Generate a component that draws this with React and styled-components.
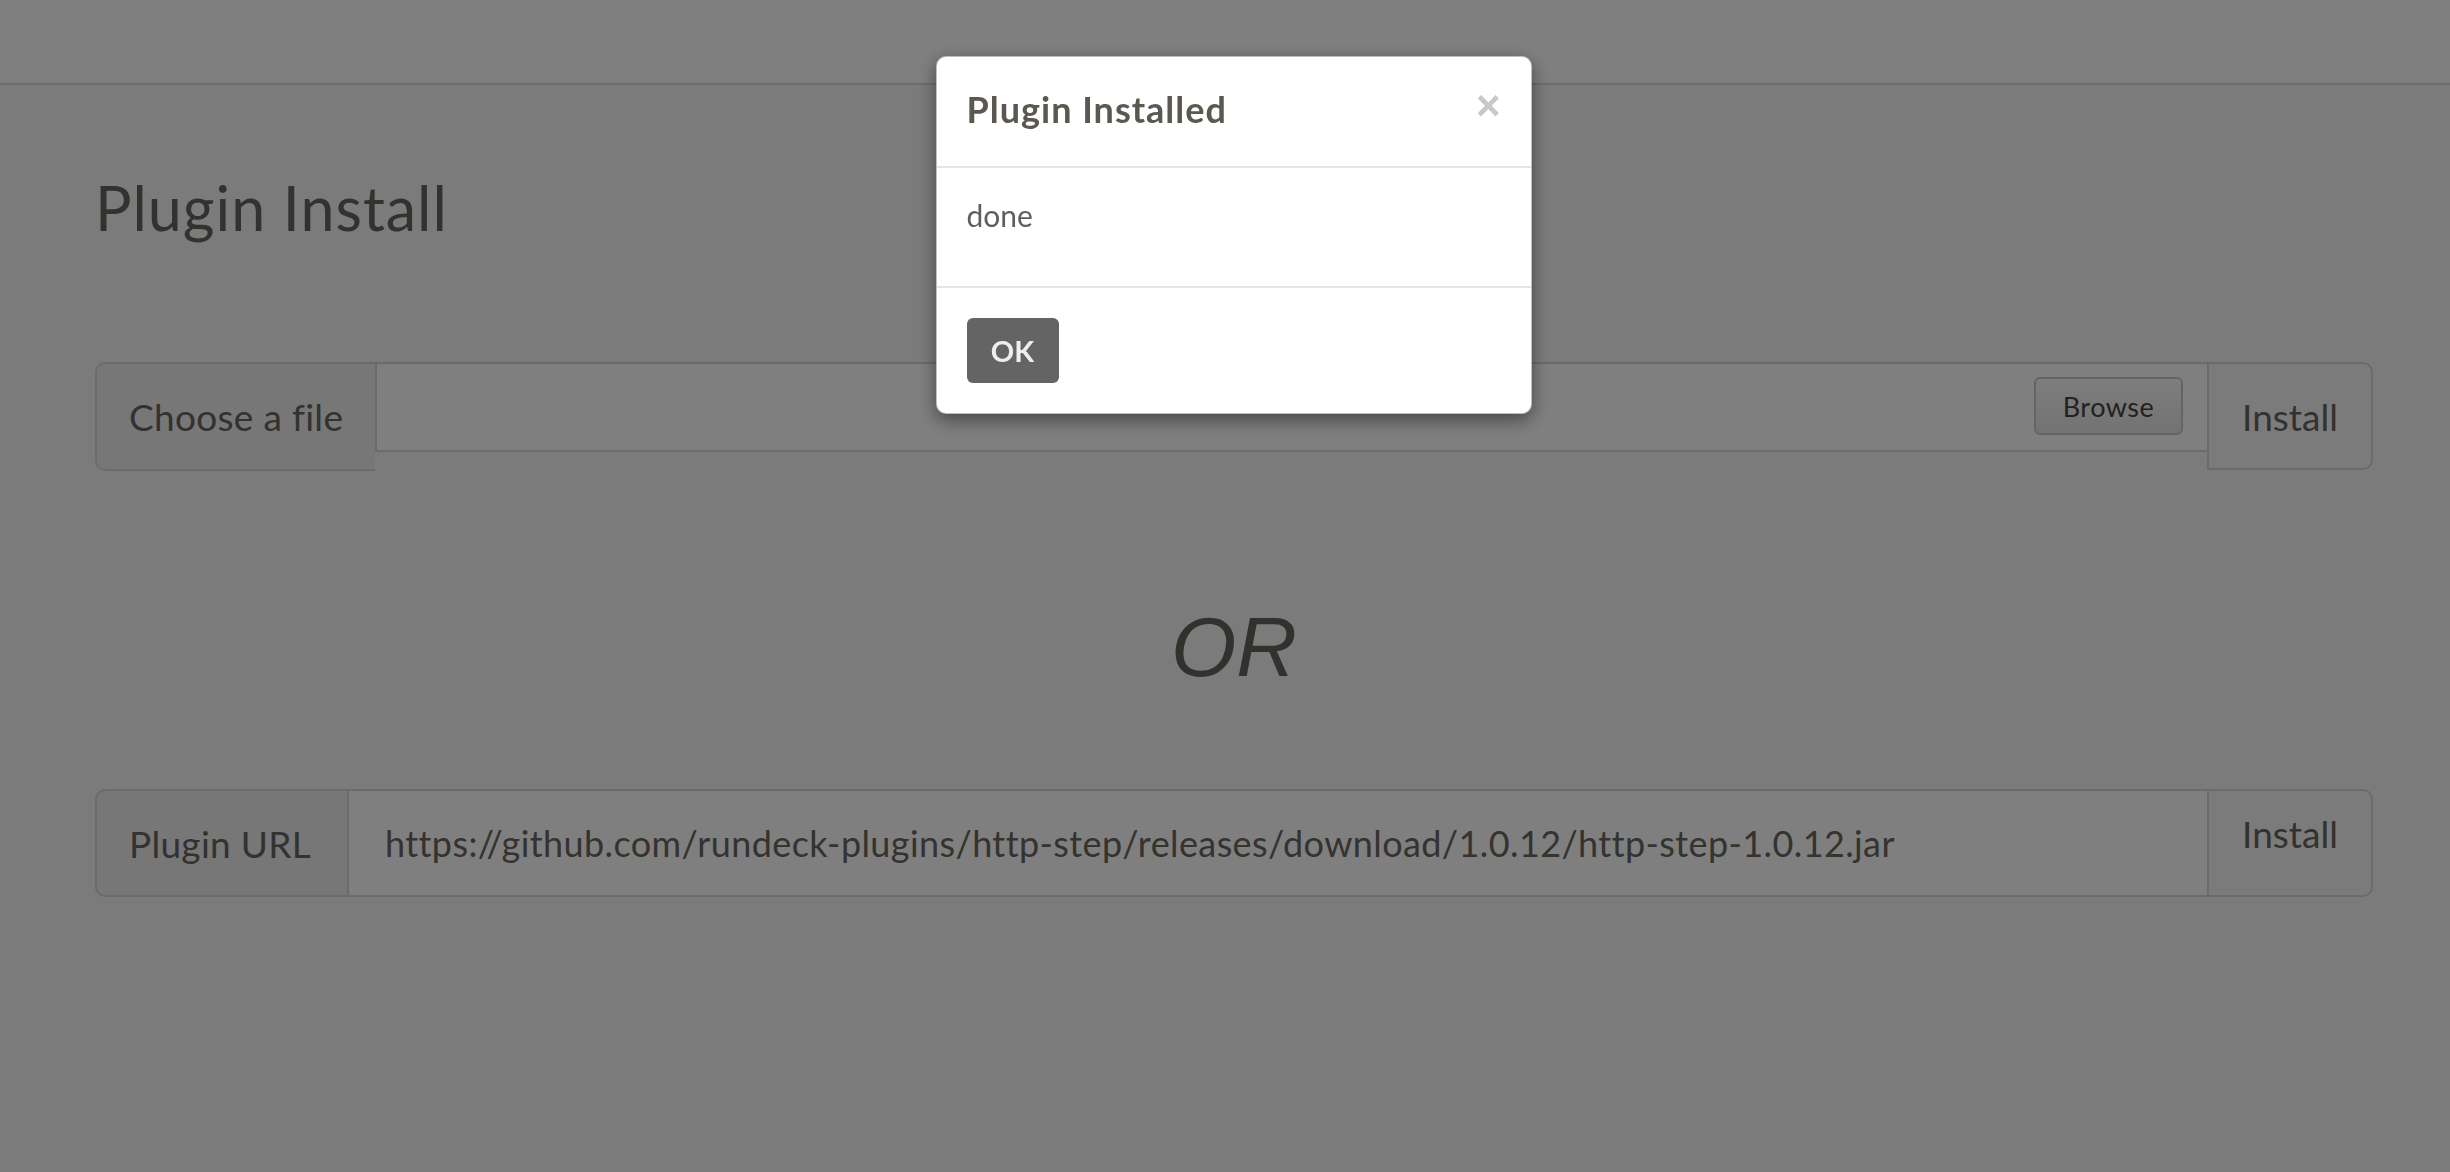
import React from 'react';
import styled, { createGlobalStyle } from 'styled-components';

const Global = createGlobalStyle`
  html, body {
    margin: 0;
    padding: 0;
    background: #f7f7f7;
    font-family: Lato, "Open Sans", sans-serif;
  }
`;

const TopBar = styled.div`
  height: 83px;
  background: #fff;
  border-bottom: 2px solid #dcdcdc;
`;

const Main = styled.div`
  padding: 0 77px 0 95px;
`;

const Title = styled.h1`
  margin: 86px 0 0;
  font-size: 61px;
  line-height: 1.2;
  font-weight: 400;
  letter-spacing: 1px;
  color: #68645e;
`;

const Group = styled.div`
  display: flex;
  align-items: flex-start;
  margin-top: ${p => p.top}px;
`;

const Addon = styled.div`
  box-sizing: border-box;
  width: ${p => p.width}px;
  height: ${p => p.height}px;
  flex-shrink: 0;
  display: flex;
  align-items: center;
  padding-left: 32px;
  background: #eeeeee;
  border: 2px solid #d6d6d6;
  border-right: none;
  border-radius: 10px 0 0 10px;
  font-size: 37px;
  letter-spacing: 0.3px;
  color: #68645e;
`;

const FileBox = styled.div`
  box-sizing: border-box;
  flex: 1;
  height: 90px;
  display: flex;
  align-items: center;
  justify-content: flex-end;
  padding-right: 24px;
  background: #fff;
  border: 2px solid #d6d6d6;
  border-right: none;
`;

const Browse = styled.button`
  box-sizing: border-box;
  width: 149px;
  height: 58px;
  margin-top: -2px;
  font-family: inherit;
  font-size: 27px;
  letter-spacing: 0.5px;
  color: #444;
  background: linear-gradient(#fbfbfb, #e6e6e6);
  border: 2px solid #c8c8c8;
  border-radius: 6px;
`;

const UrlInput = styled.div`
  box-sizing: border-box;
  flex: 1;
  height: 108px;
  display: flex;
  align-items: center;
  padding-left: 36px;
  background: #fff;
  border: 2px solid #d6d6d6;
  border-right: none;
  font-size: 36px;
  letter-spacing: 0.4px;
  color: #6a6660;
  white-space: nowrap;
  overflow: hidden;
`;

const InstallButton = styled.button`
  box-sizing: border-box;
  width: 166px;
  height: ${p => p.height}px;
  flex-shrink: 0;
  padding: 0 0 ${p => p.lift}px;
  font-family: inherit;
  font-size: 37px;
  color: #68645e;
  background: #f7f7f7;
  border: 2px solid #d6d6d6;
  border-radius: 0 10px 10px 0;
`;

const Or = styled.div`
  margin: 134px 0 0;
  text-align: center;
  font-family: "Liberation Sans", Arial, sans-serif;
  font-style: italic;
  font-size: 84px;
  line-height: 1;
  color: #66635c;
`;

const Backdrop = styled.div`
  position: fixed;
  inset: 0;
  background: rgba(0, 0, 0, 0.5);
  display: flex;
  justify-content: center;
  align-items: flex-start;
  padding-left: 17px;
`;

const Modal = styled.div`
  box-sizing: border-box;
  width: 596px;
  margin-top: 56px;
  background: #fff;
  border: 1px solid rgba(0, 0, 0, 0.25);
  border-radius: 10px;
  box-shadow: 0 6px 18px rgba(0, 0, 0, 0.45);
`;

const ModalHeader = styled.div`
  display: flex;
  justify-content: space-between;
  align-items: center;
  padding: 31px 30px 35px 30px;
  border-bottom: 2px solid #e5e5e5;
`;

const ModalTitle = styled.h4`
  margin: 0;
  font-size: 36px;
  line-height: 1.2;
  font-weight: 700;
  letter-spacing: 1px;
  color: #5b5751;
`;

const Close = styled.button`
  margin-top: -8px;
  padding: 0;
  background: none;
  border: none;
  font-family: "Liberation Sans", Arial, sans-serif;
  font-size: 42px;
  font-weight: 700;
  line-height: 1;
  color: #c8c8c8;
`;

const ModalBody = styled.div`
  padding: 29px 30px 53px;
  font-size: 30px;
  line-height: 1.2;
  color: #5e5e5e;
`;

const ModalFooter = styled.div`
  padding: 30px 30px 30px;
  border-top: 2px solid #e5e5e5;
`;

const OkButton = styled.button`
  width: 92px;
  height: 65px;
  font-family: inherit;
  font-size: 29px;
  font-weight: 700;
  color: #eeeeee;
  background: #646464;
  border: none;
  border-radius: 6px;
`;

export default function App() {
  return (
    <>
      <Global />
      <TopBar />
      <Main>
        <Title>Plugin Install</Title>
        <Group top={118}>
          <Addon width={280} height={109}>Choose a file</Addon>
          <FileBox>
            <Browse>Browse</Browse>
          </FileBox>
          <InstallButton height={108} lift={0}>Install</InstallButton>
        </Group>
        <Or>OR</Or>
        <Group top={100}>
          <Addon width={252} height={108}>Plugin URL</Addon>
          <UrlInput>https://github.com/rundeck-plugins/http-step/releases/download/1.0.12/http-step-1.0.12.jar</UrlInput>
          <InstallButton height={108} lift={20}>Install</InstallButton>
        </Group>
      </Main>
      <Backdrop>
        <Modal>
          <ModalHeader>
            <ModalTitle>Plugin Installed</ModalTitle>
            <Close>×</Close>
          </ModalHeader>
          <ModalBody>done</ModalBody>
          <ModalFooter>
            <OkButton>OK</OkButton>
          </ModalFooter>
        </Modal>
      </Backdrop>
    </>
  );
}
